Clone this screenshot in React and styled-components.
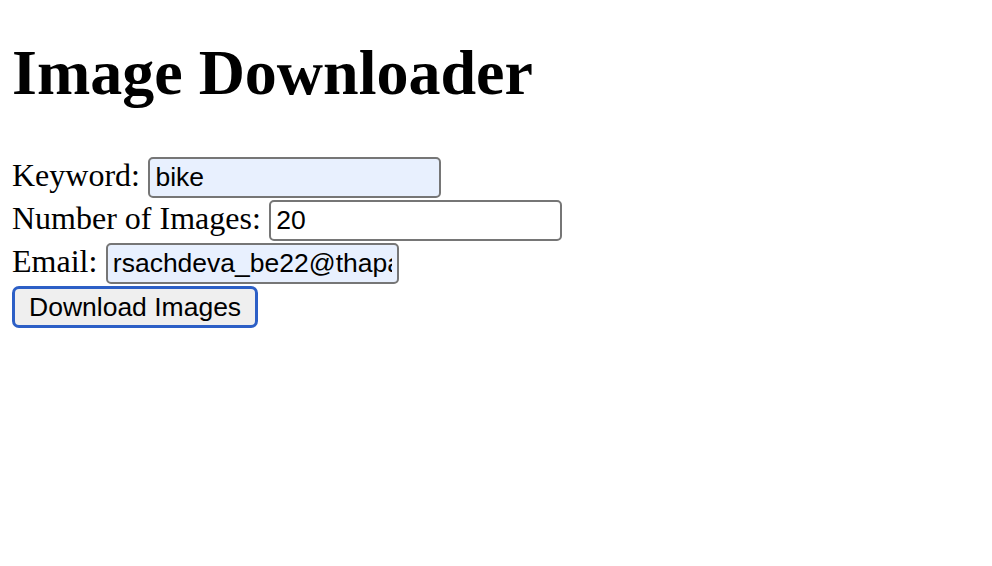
import React from 'react';
import styled, { createGlobalStyle } from 'styled-components';

const GlobalStyle = createGlobalStyle`
  html, body {
    margin: 0;
    padding: 0;
    background: #ffffff;
  }
  body {
    font-family: "Liberation Serif", "Times New Roman", serif;
    color: #000000;
  }
`;

const Page = styled.div`
  padding: 0 12px;
`;

const Title = styled.h1`
  margin: 36px 0 47px;
  font-size: 64px;
  line-height: 74px;
  font-weight: bold;
`;

const Form = styled.form`
  display: flex;
  flex-direction: column;
  align-items: flex-start;
`;

const Row = styled.div`
  display: flex;
  align-items: baseline;
  gap: 8.5px;
  height: 43px;
`;

const Label = styled.label`
  font-size: 32px;
  line-height: 37px;
  white-space: nowrap;
`;

const Input = styled.input`
  box-sizing: border-box;
  width: 293px;
  height: 41px;
  padding: 0 5px;
  border: 2px solid #767676;
  border-radius: 5px;
  background: ${(p) => (p.$filled ? '#e8f0fe' : '#ffffff')};
  font-family: "Liberation Sans", Arial, sans-serif;
  font-size: 26.5px;
  color: #000000;
  outline: none;
`;

const Button = styled.button`
  box-sizing: border-box;
  height: 42px;
  padding: 0 14px;
  border: 3px solid #2c5fc6;
  border-radius: 7px;
  background: #efefef;
  font-family: "Liberation Sans", Arial, sans-serif;
  font-size: 26.5px;
  color: #000000;
  cursor: pointer;
`;

export default function App() {
  return (
    <Page>
      <GlobalStyle />
      <Title>Image Downloader</Title>
      <Form onSubmit={(e) => e.preventDefault()}>
        <Row>
          <Label htmlFor="keyword">Keyword:</Label>
          <Input id="keyword" type="text" defaultValue="bike" $filled />
        </Row>
        <Row>
          <Label htmlFor="count">Number of Images:</Label>
          <Input id="count" type="text" defaultValue="20" />
        </Row>
        <Row>
          <Label htmlFor="email">Email:</Label>
          <Input id="email" type="text" defaultValue="rsachdeva_be22@thapar.edu" $filled />
        </Row>
        <Button type="submit">Download Images</Button>
      </Form>
    </Page>
  );
}
